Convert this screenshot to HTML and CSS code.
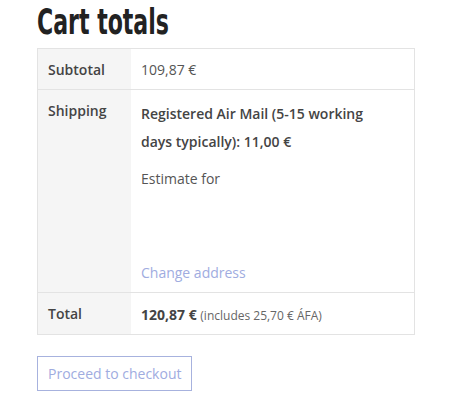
FILE: index.html
```html
<!DOCTYPE html>
<html lang="en">
<head>
<meta charset="utf-8">
<title>Cart totals</title>
<link rel="stylesheet" href="styles.css">
</head>
<body>
<div class="cart-totals">
  <h2 class="title"><span class="title-text">Cart totals</span></h2>
  <table class="totals">
    <tbody>
      <tr>
        <th>Subtotal</th>
        <td>109,87&nbsp;€</td>
      </tr>
      <tr class="shipping">
        <th>Shipping</th>
        <td>
          <div class="method">Registered Air Mail (5-15 working days typically): 11,00&nbsp;€</div>
          <p class="estimate">Estimate for</p>
          <div class="spacer"></div>
          <a class="change" href="#">Change address</a>
        </td>
      </tr>
      <tr class="total">
        <th>Total</th>
        <td><strong>120,87&nbsp;€</strong> <small>(includes 25,70&nbsp;€ ÁFA)</small></td>
      </tr>
    </tbody>
  </table>
  <a class="checkout" href="#">Proceed to checkout</a>
</div>
</body>
</html>
```
FILE: styles.css
```css
html, body {
  margin: 0;
  padding: 0;
  background: #fff;
}
body {
  font-family: "Open Sans", "Noto Sans", sans-serif;
  font-size: 14px;
  color: #555;
}
.cart-totals {
  padding: 0 39px 0 37px;
}
.title {
  margin: 0;
  padding-top: 2px;
  height: 46px;
  font-family: "DejaVu Sans", sans-serif;
  font-stretch: condensed;
  font-weight: 700;
  font-size: 35px;
  line-height: 40px;
  color: #222;
  white-space: nowrap;
}
.title-text {
  display: inline-block;
  transform: scaleX(0.7);
  transform-origin: left center;
}
.totals {
  width: 100%;
  border-collapse: collapse;
  border: 1px solid #e3e3e3;
}
.totals th, .totals td {
  border-top: 1px solid #e3e3e3;
  padding: 10px 10px 9px;
  line-height: 21px;
  vertical-align: top;
  text-align: left;
}
.totals th {
  width: 73px;
  background: #f5f5f5;
  font-weight: 600;
  color: #444;
}
.totals td {
  color: #555;
}
.method {
  max-width: 240px;
  font-weight: 600;
  line-height: 28px;
  color: #444;
}
.estimate {
  margin: 12px 0 0;
}
.spacer {
  height: 73px;
}
.change {
  color: #a0acdf;
  text-decoration: none;
}
.total td {
  padding-top: 11px;
  padding-bottom: 9px;
}
.totals strong {
  font-weight: 700;
  color: #444;
  line-height: 21px;
}
.totals small {
  font-size: 12px;
  line-height: 12px;
  color: #666;
}
.checkout {
  display: inline-block;
  margin-top: 21px;
  padding: 0 10px;
  height: 33px;
  line-height: 33px;
  border: 1px solid #a7b2de;
  color: #a0acdf;
  text-decoration: none;
  font-size: 14px;
}
```
